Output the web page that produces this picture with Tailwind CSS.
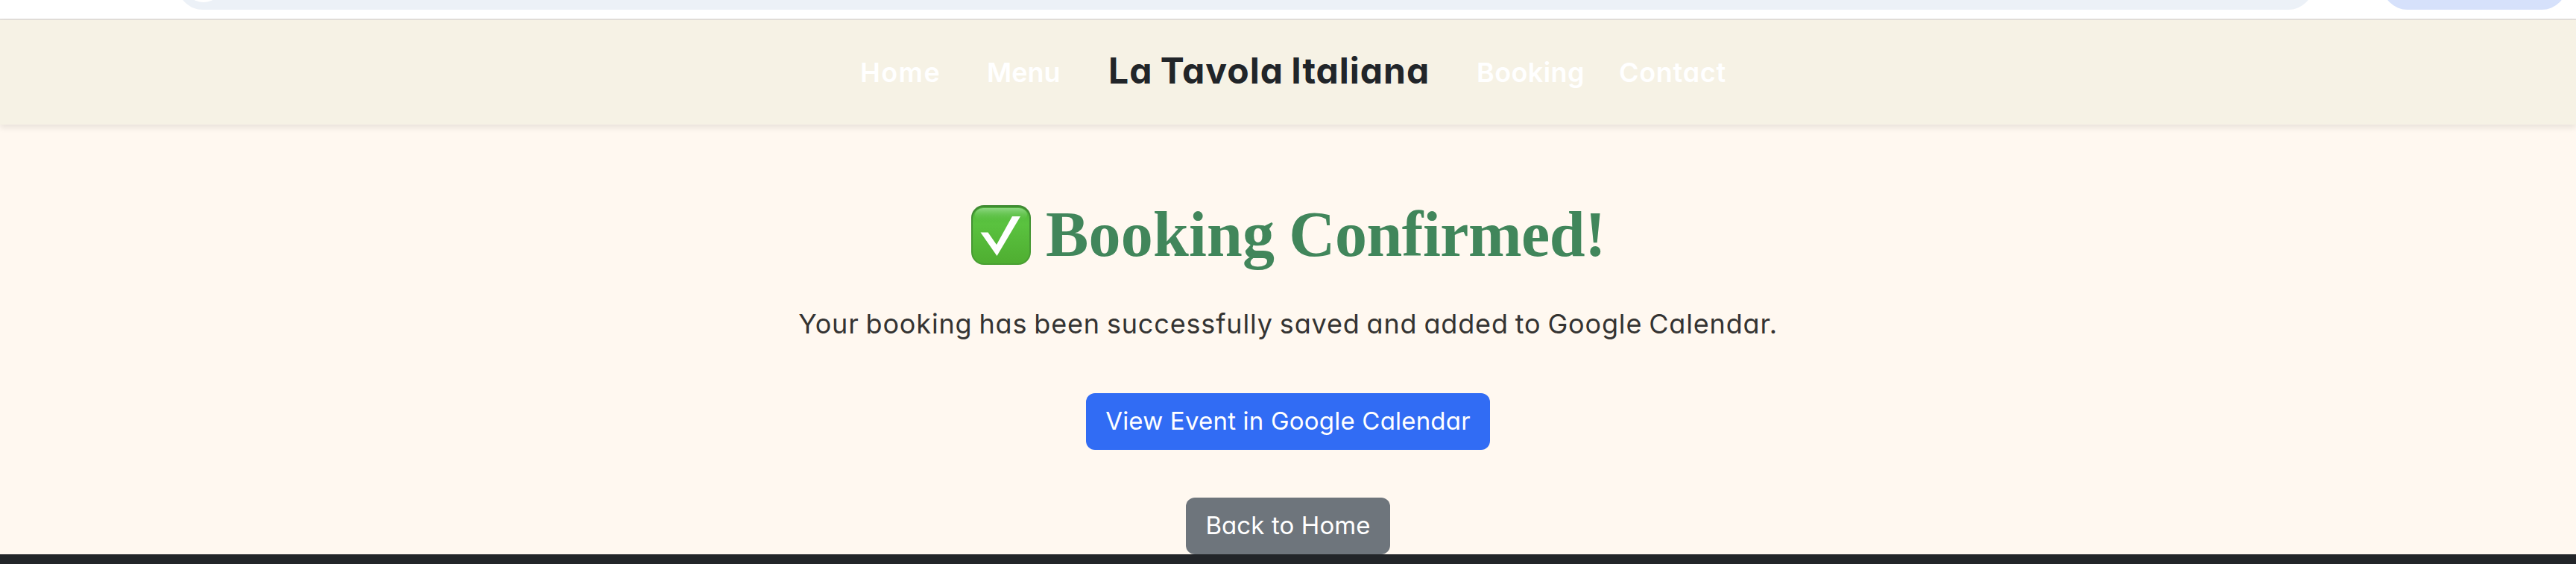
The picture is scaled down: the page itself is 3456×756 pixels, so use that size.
<!DOCTYPE html>
<html lang="en">
<head>
<meta charset="utf-8">
<title>La Tavola Italiana</title>
<script src="https://cdn.jsdelivr.net/npm/@tailwindcss/browser@4"></script>
</head>
<body class="w-[3456px] h-[756px] overflow-hidden bg-[#fff8f0] font-['Inter',sans-serif] [font-feature-settings:'cv11'] text-[#212529] whitespace-nowrap">
<div class="h-[27px] bg-white border-b-2 border-[#e3dfda]">
  <div class="flex h-[13px] items-end overflow-hidden pl-[238px]">
    <div class="flex h-[68px] w-[2866px] shrink-0 items-end rounded-full bg-[#ecf1f7] pl-2 pb-[10px]"><div class="size-[54px] rounded-full bg-white"></div></div>
    <div class="ml-[92px] h-[68px] w-[248px] shrink-0 rounded-full bg-[#d6e1fb]"></div>
  </div>
</div>
<header class="relative flex h-[140px] items-center bg-[#f6f2e5] pl-[1154px] shadow-[0_4px_8px_rgba(0,0,0,0.09)]">
  <nav class="flex items-center text-[36px] font-semibold text-white">
    <a class="w-[170px] tracking-[1.4px]">Home</a>
    <a class="w-[163px]">Menu</a>
    <a class="w-[494px] pb-1 text-[48px] leading-none font-bold tracking-[1px] text-[#212529] [word-spacing:-2px]">La Tavola Italiana</a>
    <a class="w-[191px] tracking-[0.4px]">Booking</a>
    <a class="tracking-[0.7px]">Contact</a>
  </nav>
</header>
<main class="flex h-[576px] flex-col items-center pt-[98px]">
  <h1 class="flex h-[100px] w-[850px] items-center font-['Liberation_Serif',serif] text-[86px] leading-[100px] font-bold text-[#41865b]">
    <svg class="mr-[20px] size-[80px] shrink-0" viewBox="0 0 80 80">
      <defs>
        <linearGradient id="g" x1="0" y1="0" x2="0" y2="1"><stop offset="0" stop-color="#52b83c"/><stop offset=".3" stop-color="#5ac23f"/><stop offset="1" stop-color="#4fae31"/></linearGradient>
        <linearGradient id="h" x1="0" y1="0" x2="0" y2="1"><stop offset="0" stop-color="#8fd884"/><stop offset="1" stop-color="#5ac23f" stop-opacity="0"/></linearGradient>
        <linearGradient id="e" x1="0" y1="0" x2="0" y2="1"><stop offset="0" stop-color="#3f8a32"/><stop offset="1" stop-color="#4aa033"/></linearGradient>
      </defs>
      <rect width="80" height="80" rx="17" fill="url(#e)"/>
      <rect x="2" y="3" width="76" height="75" rx="15" fill="url(#g)"/>
      <rect x="5" y="4" width="70" height="18" rx="11" fill="url(#h)"/>
      <path d="M12.5 36.5H22.5L34 53L55 15H66L34.5 68Z" fill="#fff"/>
    </svg>
    <span class="mr-[19px] pb-0.5 tracking-[0.2px]">Booking</span>
    <span class="pb-0.5 tracking-[-0.5px]">Confirmed!</span>
  </h1>
  <p class="mt-[39px] text-[36px] leading-[60px] tracking-[0.84px] text-[#343332] [word-spacing:-2px]">Your booking has been successfully saved and added to Google Calendar.</p>
  <a class="mt-[63px] flex h-[76px] w-[542px] shrink-0 items-center justify-center rounded-[12px] bg-[#316cf4] text-[33px] tracking-[0.2px] text-white">View Event in Google Calendar</a>
  <a class="mt-16 flex h-[76px] w-[274px] shrink-0 items-center justify-center rounded-[12px] bg-[#6e757c] text-[33px] tracking-[0.1px] text-white">Back to Home</a>
</main>
<footer class="h-[13px] bg-[#222529]"></footer>
</body>
</html>
